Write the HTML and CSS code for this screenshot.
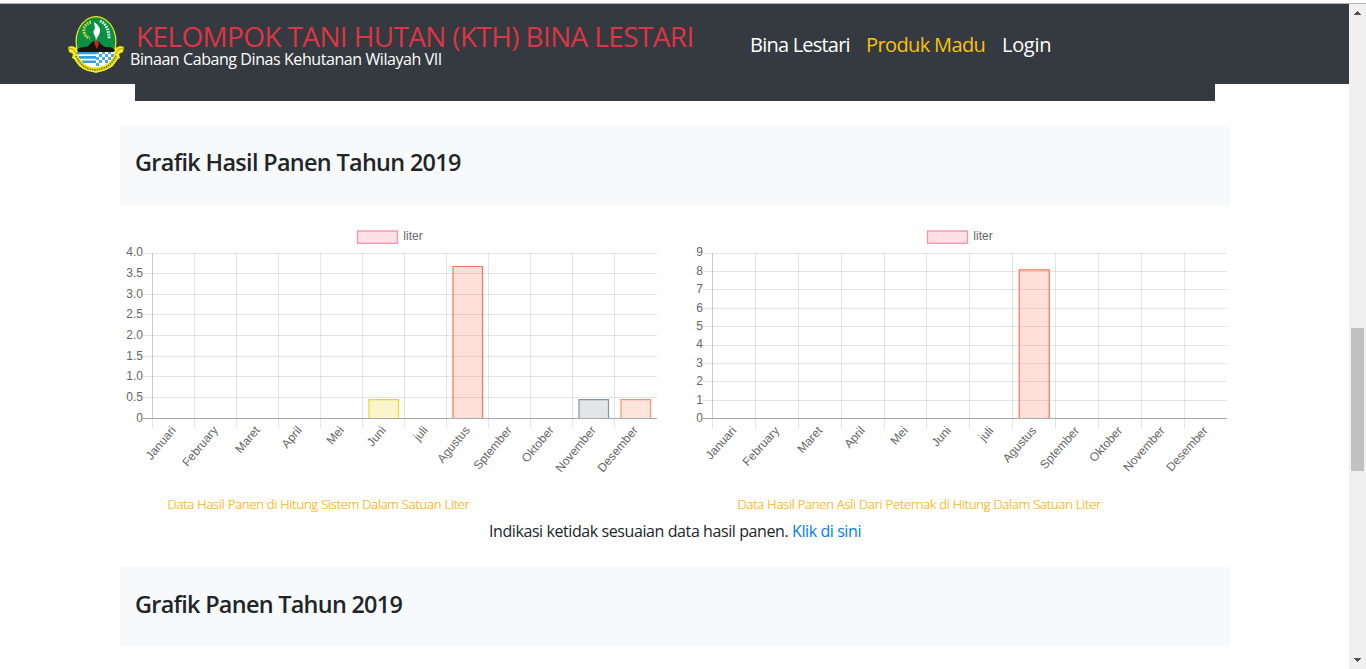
FILE: index.html
```html
<!DOCTYPE html>
<html lang="id">
<head>
<meta charset="utf-8">
<title>KTH Bina Lestari</title>
<link rel="stylesheet" href="styles.css">
</head>
<body>
<div class="window">
  <div class="page">
    <header class="navbar">
      <svg class="logo" width="58" height="60" viewBox="0 0 58 60">
        <path d="M1 32l4-1 5 2 2 7 6 9 11 4 11-4 6-9 2-7 5-2 4 1-1 5-4 2 1 4-4 2-3 6-7 4-10 3-10-3-7-4-3-6-4-2 1-4-4-2z" fill="#f5e91e"/>
        <ellipse cx="29" cy="26.500" rx="20.500" ry="25.500" fill="#f5e91e"/>
        <ellipse cx="29" cy="26.500" rx="19.300" ry="24.300" fill="#0a8f45"/>
        <path d="M10 36h38q-2 10-10 15-9 4-18 0-8-5-10-15z" fill="#fff"/>
        <path d="M10 36.500h19v2.800H10zM12 41h17v2.800H12zM15 45.500h14v2.500H15z" fill="#2b9fe0"/>
        <path d="M29 36h3v3h-3zM35 36h3v3h-3zM41 36h3v3h-3zM32 39h3v3h-3zM38 39h3v3h-3zM44 39h3v3h-3zM29 42h3v3h-3zM35 42h3v3h-3zM41 42h3v3h-3zM32 45h3v3h-3zM38 45h3v3h-3zM29 48h3v3h-3z" fill="#4aa6df"/>
        <path d="M10 34q4-2 8-2 3 0 6-4l3-2h4l4 4q3 3 7 2 3 0 6 3l-1 2H11z" fill="#17130f"/>
        <path d="M27 26h4l1 3-2 5-2-4z" fill="#c9261c"/>
        <path d="M29 26c0-6-4-7-2-11 2-2 0-5 0-8 4 3 6 5 6 9 0 4-3 5-4 10z" fill="#fff"/>
        <path d="M24 7q-8 3-7 10 1 5 6 6" fill="none" stroke="#d9d63a" stroke-width="3" stroke-dasharray="1.700 1"/>
        <path d="M33 6q9 4 9 18" fill="none" stroke="#dfeee0" stroke-width="3" stroke-dasharray="1.700 1"/>
        <path d="M8 40q4 10 13 13.500 8 3 17-1 8-3 12-12.500" fill="none" stroke="#f5e91e" stroke-width="5"/>
        <path d="M9 41q4 9 12 12.500 8 3 17-1 7-3 11-11.500" fill="none" stroke="#6b7318" stroke-width="1.800" stroke-dasharray="1.500 .9"/>
        <path d="M1 33l5 1 4 5M57 33l-5 1-4 5" fill="none" stroke="#b5a911"/>
      </svg>
      <div class="brand">
        <div class="brand-title">KELOMPOK TANI HUTAN (KTH) BINA LESTARI</div>
        <div class="brand-sub">Binaan Cabang Dinas Kehutanan Wilayah VII</div>
      </div>
      <nav class="menu">
        <a class="m1">Bina Lestari</a>
        <a class="m2 active">Produk Madu</a>
        <a class="m3">Login</a>
      </nav>
    </header>
    <div class="banner"></div>
    <section class="panel"><h4 class="t1">Grafik Hasil Panen Tahun 2019</h4></section>
    <div class="charts">
      <figure class="col">
        <svg class="chart" width="540" height="270" viewBox="120 220 540 270">
          <rect class="legend" x="357.500" y="231" width="40" height="12.300"/>
          <text x="403.300" y="240">liter</text>
          <path class="grid" d="M143 253.500H657M143 273.500H657M143 294.500H657M143 314.500H657M143 335.500H657M143 356.500H657M143 376.500H657M143 397.500H657"/>
          <path class="grid" d="M194.500 253V428M236.500 253V428M278.500 253V428M320.500 253V428M362.500 253V428M404.500 253V428M446.500 253V428M488.500 253V428M530.500 253V428M572.500 253V428M614.500 253V428M152.500 419V428"/>
          <path class="edge" d="M152.500 253V418"/>
          <path class="yellow" d="M369 418V399.700H398.500V418"/>
          <path class="tomato" d="M453 418V266.500H482.500V418"/>
          <path class="slate" d="M579 418V399.700H608.500V418"/>
          <path class="coral" d="M621 418V399.700H650.500V418"/>
          <path class="axis" d="M143 418.500H657"/>
          <g class="end">
            <text x="143" y="256">4.0</text><text x="143" y="277">3.5</text><text x="143" y="298">3.0</text><text x="143" y="318">2.5</text><text x="143" y="339">2.0</text><text x="143" y="360">1.5</text><text x="143" y="380">1.0</text><text x="143" y="401">0.5</text><text x="143" y="422">0</text>
            <text transform="translate(176.500 430.500) rotate(-50)">Januari</text>
            <text transform="translate(218.500 430.500) rotate(-50)">February</text>
            <text transform="translate(260.500 430.500) rotate(-50)">Maret</text>
            <text transform="translate(302.500 430.500) rotate(-50)">April</text>
            <text transform="translate(344.500 430.500) rotate(-50)">Mei</text>
            <text transform="translate(386.500 430.500) rotate(-50)">Juni</text>
            <text transform="translate(428.500 430.500) rotate(-50)">juli</text>
            <text transform="translate(470.500 430.500) rotate(-50)">Agustus</text>
            <text transform="translate(512.500 430.500) rotate(-50)">Sptember</text>
            <text transform="translate(554.500 430.500) rotate(-50)">Oktober</text>
            <text transform="translate(596.500 430.500) rotate(-50)">November</text>
            <text transform="translate(638.500 430.500) rotate(-50)">Desember</text>
          </g>
        </svg>
        <figcaption class="c1">Data Hasil Panen di Hitung Sistem Dalam Satuan Liter</figcaption>
      </figure>
      <figure class="col">
        <svg class="chart" width="540" height="270" viewBox="690 220 540 270">
          <rect class="legend" x="927.500" y="231" width="40" height="12.300"/>
          <text x="973.300" y="240">liter</text>
          <path class="grid" d="M703 253.500H1227M703 271.500H1227M703 289.500H1227M703 308.500H1227M703 326.500H1227M703 345.500H1227M703 363.500H1227M703 381.500H1227M703 400.500H1227"/>
          <path class="grid" d="M755.500 253V429M798.500 253V429M841.500 253V429M884.500 253V429M926.500 253V429M969.500 253V429M1012.500 253V429M1055.500 253V429M1098.500 253V429M1141.500 253V429M1184.500 253V429M712.500 419V429"/>
          <path class="edge" d="M712.500 253V418"/>
          <path class="tomato" d="M1019.200 418V269.800H1049.200V418"/>
          <path class="axis" d="M703 418.500H1227"/>
          <g class="end">
            <text x="703" y="256">9</text><text x="703" y="275">8</text><text x="703" y="293">7</text><text x="703" y="312">6</text><text x="703" y="330">5</text><text x="703" y="348">4</text><text x="703" y="367">3</text><text x="703" y="385">2</text><text x="703" y="404">1</text><text x="703" y="422">0</text>
            <text transform="translate(737 431) rotate(-48)">Januari</text>
            <text transform="translate(780 431) rotate(-48)">February</text>
            <text transform="translate(823 431) rotate(-48)">Maret</text>
            <text transform="translate(865.500 431) rotate(-48)">April</text>
            <text transform="translate(908.500 431) rotate(-48)">Mei</text>
            <text transform="translate(951.500 431) rotate(-48)">Juni</text>
            <text transform="translate(994 431) rotate(-48)">juli</text>
            <text transform="translate(1037 431) rotate(-48)">Agustus</text>
            <text transform="translate(1080 431) rotate(-48)">Sptember</text>
            <text transform="translate(1123 431) rotate(-48)">Oktober</text>
            <text transform="translate(1165.500 431) rotate(-48)">November</text>
            <text transform="translate(1208.500 431) rotate(-48)">Desember</text>
          </g>
        </svg>
        <figcaption class="c2">Data Hasil Panen Asli Dari Peternak di Hitung Dalam Satuan Liter</figcaption>
      </figure>
    </div>
    <p class="note">Indikasi ketidak sesuaian data hasil panen. <a>Klik di sini</a></p>
    <section class="panel"><h4 class="t2">Grafik Panen Tahun 2019</h4></section>
  </div>
  <div class="scrollbar">
    <svg width="7" height="4" viewBox="0 0 7 4" shape-rendering="crispEdges"><path d="M3 0h1v1h1v1h1v1h1v1H0V3h1V2h1V1h1z" fill="#505050"/></svg>
    <div class="thumb"></div>
    <svg width="7" height="4" viewBox="0 0 7 4" shape-rendering="crispEdges"><path d="M3 4h1V3h1V2h1V1h1V0H0v1h1v1h1v1h1z" fill="#505050"/></svg>
  </div>
</div>
</body>
</html>
```
FILE: styles.css
```css
* { box-sizing: border-box; }
body {
  margin: 0;
  height: 669px;
  padding-top: 3px;
  overflow: hidden;
  background: #fff;
  color: #212529;
  font-family: "Open Sans", "Noto Sans", sans-serif;
}
.window { display: flex; height: 666px; border-top: 1px solid #b4b4b4; }
.page { width: 1349px; }
.navbar { display: flex; height: 80px; background: #343a40; padding-left: 67px; }
.logo { margin-top: 10.500px; flex: none; }
.brand { width: 625px; flex: none; padding: 17px 0 0 5px; white-space: nowrap; }
.brand-title { padding-left: 6px; font-size: 28px; line-height: 30px; color: #dc3545; letter-spacing: -.64px; }
.brand-sub { font-size: 16px; line-height: 16px; color: #fff; letter-spacing: -.42px; }
.menu { display: flex; gap: 16px; padding-top: 26px; font-size: 20px; line-height: 30px; color: #fff; white-space: nowrap; }
.m1 { width: 100px; letter-spacing: -.78px; }
.m2 { width: 120px; letter-spacing: -.62px; }
.m3 { letter-spacing: -.3px; }
.active { color: #ffc107; }
.banner { width: 1080px; height: 17px; margin: 0 0 24px 135px; background: #343a40; }
.panel { width: 1110px; height: 80px; margin-left: 120px; padding: 22px 15px 0; background: #f8f9fa; }
.panel h4 { margin: 0; font-size: 23.400px; line-height: 30px; font-weight: 600; }
.t1 { letter-spacing: -.66px; }
.t2 { letter-spacing: -.7px; }
.charts { display: flex; gap: 30px; padding: 15px 0 0 120px; }
.col { width: 540px; margin: 0; }
.chart { display: block; }
.chart text { font: 12px "Liberation Sans", Arial, sans-serif; fill: #666; }
.chart .end text { text-anchor: end; }
.grid { stroke: rgba(0,0,0,.1); fill: none; }
.edge { stroke: rgba(0,0,0,.2); }
.axis { stroke: #a9a9a9; }
.legend { fill: #ffe0e6; stroke: #fa90aa; stroke-width: 1.3px; }
.yellow { fill: rgba(230,215,20,.22); stroke: #e8da20; stroke-width: 1.2px; }
.tomato { fill: rgba(244,100,65,.2); stroke: #f87458; stroke-width: 1.2px; }
.slate { fill: rgba(112,128,144,.2); stroke: #8491a0; stroke-width: 1.2px; }
.coral { fill: rgba(255,127,80,.2); stroke: #fa9070; stroke-width: 1.2px; }
figcaption { padding: 5px 0 0 47.500px; font-size: 13px; line-height: 19px; font-weight: 300; color: #ffb300; white-space: nowrap; letter-spacing: -.19px; -webkit-text-stroke: .2px #ffb300; }
.note { width: 1110px; margin: 5px 0 24px 120px; text-align: center; font-size: 16px; line-height: 24px; letter-spacing: -.41px; }
.note a { color: #007bff; }
.scrollbar { width: 17px; background: #f0f0f0; display: flex; flex-direction: column; align-items: center; padding: 7px 0; }
.thumb { width: 13px; height: 143px; margin: 313px 0 187px; background: #c1c1c1; }
```
